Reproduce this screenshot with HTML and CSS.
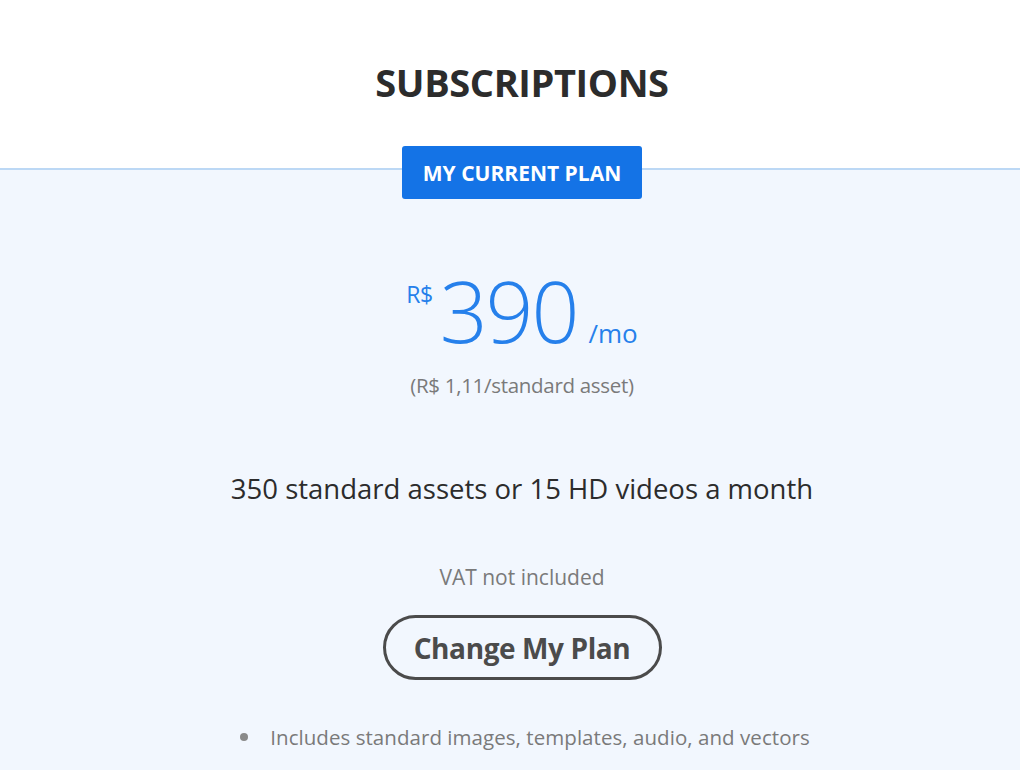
FILE: index.html
```html
<!DOCTYPE html>
<html lang="en">
<head>
<meta charset="utf-8">
<title>Subscriptions</title>
<link rel="stylesheet" href="styles.css">
</head>
<body>
<header class="top">
  <h1 class="title">SUBSCRIPTIONS</h1>
</header>
<main class="panel">
  <div class="badge">MY CURRENT PLAN</div>
  <div class="price">
    <span class="currency">R$</span><span class="amount">390</span><span class="period">/mo</span>
  </div>
  <p class="unit">(R$ 1,11/standard asset)</p>
  <p class="quota">350 standard assets or 15 HD videos a month</p>
  <p class="vat">VAT not included</p>
  <button class="change">Change My Plan</button>
  <ul class="features">
    <li>Includes standard images, templates, audio, and vectors</li>
  </ul>
</main>
</body>
</html>
```
FILE: styles.css
```css
* { box-sizing: border-box; }
html, body { margin: 0; padding: 0; }
body {
  font-family: "Open Sans", "Noto Sans", sans-serif;
  background: #f2f7fe;
  width: 1020px;
  height: 770px;
  overflow: hidden;
}
.top {
  background: #ffffff;
  height: 170px;
  border-bottom: 2px solid #bcd8f5;
  display: flex;
  justify-content: center;
  padding-left: 24px;
}
.title {
  margin: 58px 0 0;
  font-size: 38px;
  font-weight: 700;
  color: #2c2c2c;
  letter-spacing: -0.4px;
  line-height: 48px;
}
.panel {
  display: flex;
  flex-direction: column;
  align-items: center;
  padding-left: 24px;
}
.badge {
  margin-top: -24px;
  width: 240px;
  height: 53px;
  background: #1473e6;
  color: #fff;
  border-radius: 3px;
  font-weight: 700;
  font-size: 21px;
  letter-spacing: 0;
  display: flex;
  align-items: center;
  justify-content: center;
}
.price {
  margin-top: 72px;
  display: flex;
  align-items: baseline;
  color: #2680eb;
  height: 80px;
  line-height: 80px;
}
.currency {
  font-size: 23px;
  align-self: flex-start;
  line-height: 22px;
  margin-top: 12px;
  margin-right: 7px;
  letter-spacing: -0.5px;
}
.amount {
  font-size: 84px;
  font-weight: 300;
  letter-spacing: -2px;
}
.period {
  font-size: 26px;
  margin-left: 11px;
}
.unit {
  margin: 20px 0 0;
  font-size: 20.5px;
  color: #7a7a7a;
  line-height: 28px;
  letter-spacing: -0.3px;
}
.quota {
  margin: 72px 0 0;
  font-size: 27.5px;
  color: #2c2c2c;
  line-height: 36px;
  letter-spacing: 0;
}
.vat {
  margin: 57px 0 0;
  font-size: 21px;
  color: #7a7a7a;
  line-height: 26px;
  letter-spacing: 0;
}
.change {
  margin-top: 25px;
  width: 279px;
  height: 65px;
  border: 3px solid #4b4b4b;
  border-radius: 33px;
  background: transparent;
  color: #4b4b4b;
  font-family: inherit;
  font-size: 28px;
  font-weight: 700;
  letter-spacing: -0.4px;
  padding: 0;
}
.features {
  margin: 43px 0 0;
  padding: 0 0 0 6px;
  list-style: none;
}
.features li {
  display: flex;
  align-items: center;
  gap: 22px;
  font-size: 20.5px;
  color: #7a7a7a;
  line-height: 28px;
  letter-spacing: 0.05px;
}
.features li::before {
  content: "";
  width: 8px;
  height: 8px;
  border-radius: 50%;
  background: #8a8a8a;
}
```
